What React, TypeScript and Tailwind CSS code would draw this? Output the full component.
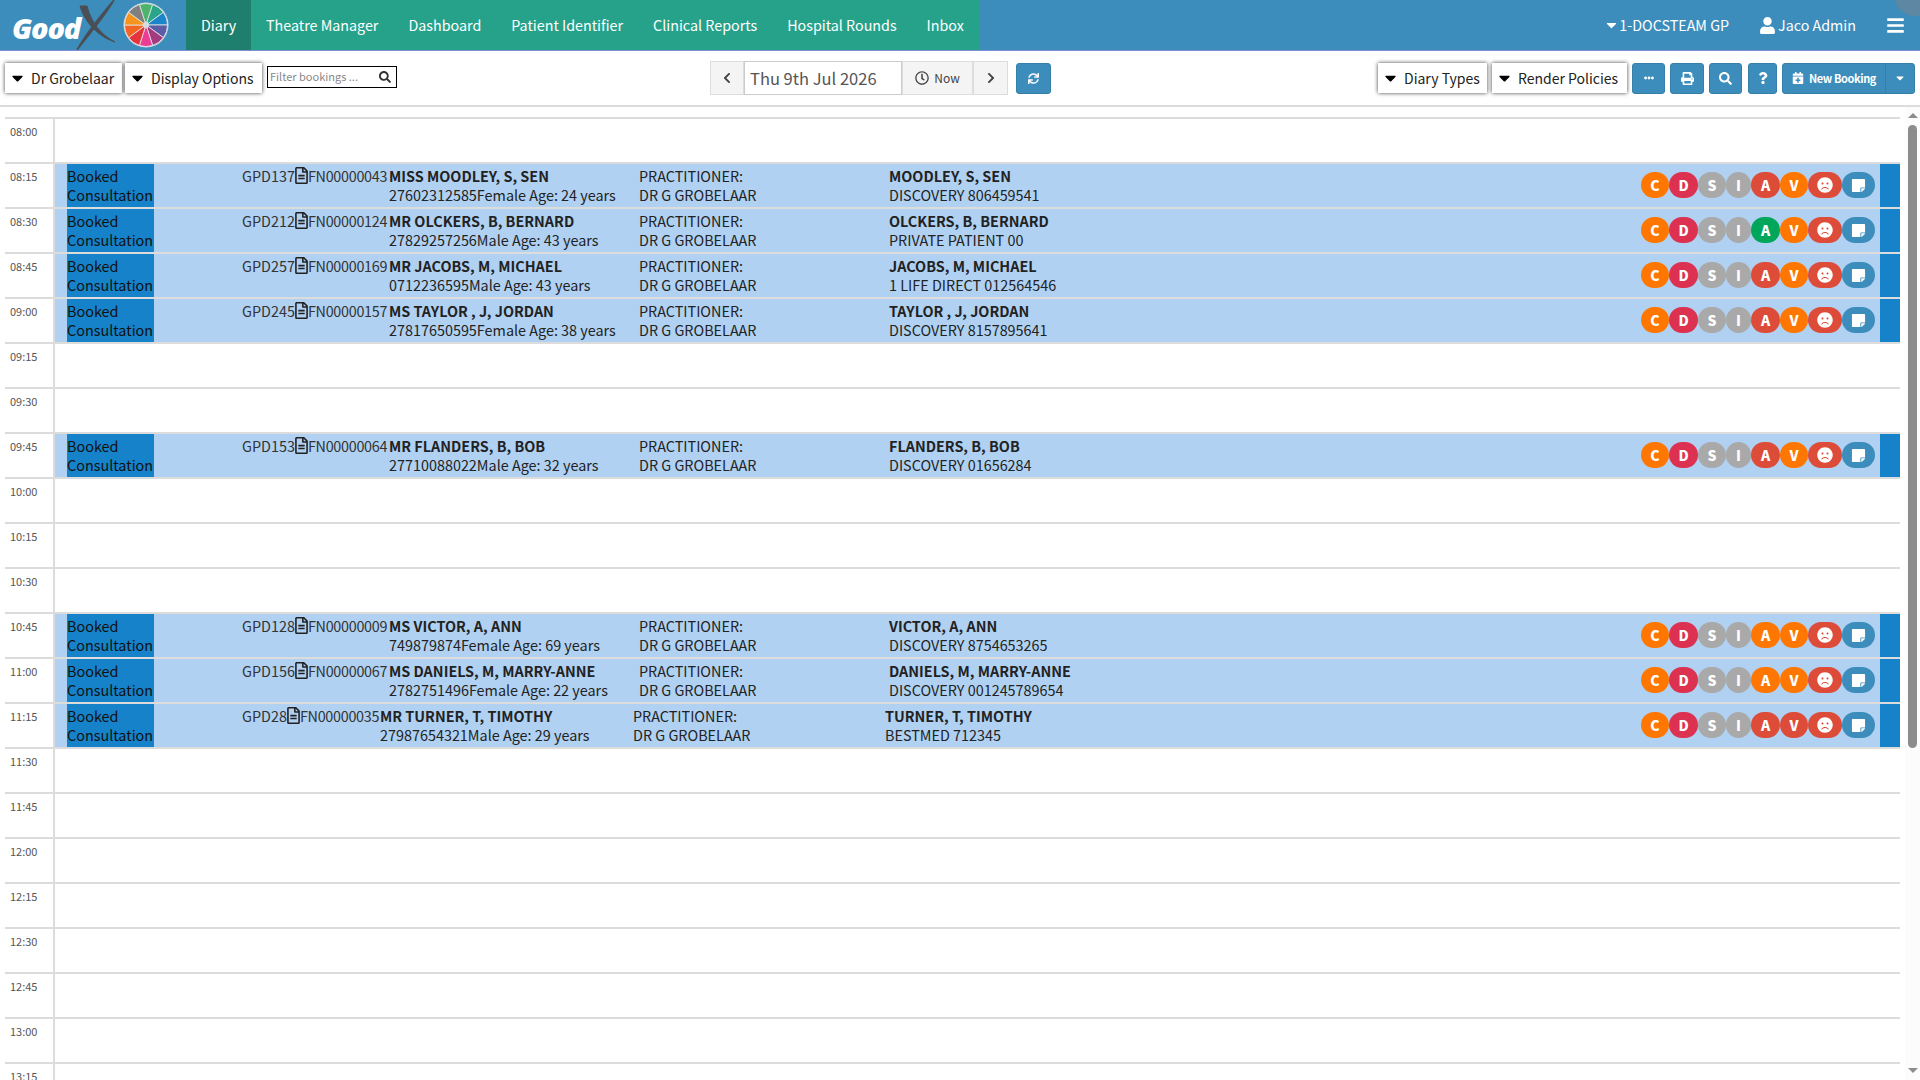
import { FaCalendarPlus, FaCaretDown, FaChevronLeft, FaChevronRight, FaEllipsisH, FaFrown, FaPrint, FaQuestion, FaRegClock, FaRegFileAlt, FaSearch, FaStickyNote, FaSync, FaUser, FaBars } from 'react-icons/fa';

const font = "font-['Noto_Sans_CJK_SC','Liberation_Sans',sans-serif]";

const red = 'bg-[#dd4b39]';
const orange = 'bg-[#ff7701]';
const green = 'bg-[#00a65a]';

type Booking = {
  gpd: string;
  fn: string;
  name: string;
  phone: string;
  info: string;
  patient: string;
  aid: string;
  a: string;
  v: string;
  w1: string;
  w2: string;
  w3: string;
};

const defaults = { w1: 'w-[147px]', w2: 'w-[250px]', w3: 'w-[250px]' };

const bookings: Record<string, Booking> = {
  '08:15': { ...defaults, gpd: 'GPD137', fn: 'FN00000043', name: 'MISS MOODLEY, S, SEN', phone: '27602312585', info: 'Female Age: 24 years', patient: 'MOODLEY, S, SEN', aid: 'DISCOVERY 806459541', a: red, v: orange },
  '08:30': { ...defaults, gpd: 'GPD212', fn: 'FN00000124', name: 'MR OLCKERS, B, BERNARD', phone: '27829257256', info: 'Male Age: 43 years', patient: 'OLCKERS, B, BERNARD', aid: 'PRIVATE PATIENT 00', a: green, v: orange },
  '08:45': { ...defaults, gpd: 'GPD257', fn: 'FN00000169', name: 'MR JACOBS, M, MICHAEL', phone: '0712236595', info: 'Male Age: 43 years', patient: 'JACOBS, M, MICHAEL', aid: '1 LIFE DIRECT 012564546', a: red, v: orange },
  '09:00': { ...defaults, gpd: 'GPD245', fn: 'FN00000157', name: 'MS TAYLOR , J, JORDAN', phone: '27817650595', info: 'Female Age: 38 years', patient: 'TAYLOR , J, JORDAN', aid: 'DISCOVERY 8157895641', a: red, v: orange },
  '09:45': { ...defaults, gpd: 'GPD153', fn: 'FN00000064', name: 'MR FLANDERS, B, BOB', phone: '27710088022', info: 'Male Age: 32 years', patient: 'FLANDERS, B, BOB', aid: 'DISCOVERY 01656284', a: red, v: orange },
  '10:45': { ...defaults, gpd: 'GPD128', fn: 'FN00000009', name: 'MS VICTOR, A, ANN', phone: '749879874', info: 'Female Age: 69 years', patient: 'VICTOR, A, ANN', aid: 'DISCOVERY 8754653265', a: orange, v: orange },
  '11:00': { ...defaults, gpd: 'GPD156', fn: 'FN00000067', name: 'MS DANIELS, M, MARRY-ANNE', phone: '2782751496', info: 'Female Age: 22 years', patient: 'DANIELS, M, MARRY-ANNE', aid: 'DISCOVERY 001245789654', a: orange, v: orange },
  '11:15': { gpd: 'GPD28', fn: 'FN00000035', name: 'MR TURNER, T, TIMOTHY', phone: '27987654321', info: 'Male Age: 29 years', patient: 'TURNER, T, TIMOTHY', aid: 'BESTMED 712345', a: red, v: red, w1: 'w-[138px]', w2: 'w-[253px]', w3: 'w-[252px]' },
};

const times = ['08:00', '08:15', '08:30', '08:45', '09:00', '09:15', '09:30', '09:45', '10:00', '10:15', '10:30', '10:45', '11:00', '11:15', '11:30', '11:45', '12:00', '12:15', '12:30', '12:45', '13:00', '13:15'];

const navItems = ['Theatre Manager', 'Dashboard', 'Patient Identifier', 'Clinical Reports', 'Hospital Rounds', 'Inbox'];

const wheelColors = ['#4cb56b', '#2aa58a', '#1a85c8', '#5b5ea6', '#a33b80', '#e93d96', '#e6343c', '#f26522', '#f7941d', '#808080'];

function Wheel() {
  const point = (deg: number, r: number) => {
    const rad = ((deg - 90) * Math.PI) / 180;
    return `${23 + r * Math.cos(rad)} ${23 + r * Math.sin(rad)}`;
  };
  return (
    <svg width="46" height="46" viewBox="0 0 46 46">
      <circle cx="23" cy="23" r="22.5" fill="#d5dde3" />
      {wheelColors.map((c, i) => {
        const start = -18 + i * 36;
        return <path key={c} d={`M${point(start, 3)} L${point(start, 21.5)} A21.5 21.5 0 0 1 ${point(start + 36, 21.5)} L${point(start + 36, 3)} Z`} fill={c} stroke="#e4e8ea" strokeWidth="0.8" />;
      })}
    </svg>
  );
}

function Logo() {
  return (
    <div className="relative w-[186px] h-full shrink-0">
      <span className="absolute left-[12px] top-[10px] text-[29px] leading-[36px] font-extrabold italic text-white font-['Open_Sans',sans-serif] tracking-[-1.2px]">Good</span>
      <svg className="absolute left-[76px] top-0" width="44" height="50" viewBox="0 0 44 50">
        <path d="M4 6 C8 20 20 36 39 42 C25 35 15 22 11 6 Z" fill="#4a4f55" stroke="#4a4f55" strokeWidth="1" />
        <path d="M38 0 C26 14 12 30 1 50 C13 34 28 18 38 0 Z" fill="#4a4f55" stroke="#4a4f55" strokeWidth="1.5" />
      </svg>
      <div className="absolute left-[123px] top-[2px]">
        <Wheel />
      </div>
    </div>
  );
}

function Dropdown({ label, width }: { label: string; width: string }) {
  return (
    <div className={`${width} h-[30px] bg-white flex items-center pl-[7px] gap-[8px] text-[14px] text-[#222] shadow-[0_0_4px_rgba(0,0,0,0.75)]`}>
      <FaCaretDown className="w-[11px] h-[18px] text-black shrink-0" />
      <span className="whitespace-nowrap">{label}</span>
    </div>
  );
}

function Square({ width, children }: { width: string; children: React.ReactNode }) {
  return <div className={`${width} h-[31px] bg-[#3c8dbc] border border-[#367fa9] rounded-[3px] flex items-center justify-center text-white text-[13px]`}>{children}</div>;
}

function Toolbar() {
  return (
    <div className="h-[54px] flex items-center pl-[5px] pr-[5px]">
      <div className="flex items-center gap-[3px]">
        <Dropdown label="Dr Grobelaar" width="w-[117px]" />
        <Dropdown label="Display Options" width="w-[137px]" />
      </div>
      <div className="ml-[5px] w-[130px] h-[22px] border border-black flex items-center justify-between pl-[2px] pr-[5px] -mt-[3px]">
        <span className="text-[11px] text-[#888]">Filter bookings ...</span>
        <FaSearch className="text-[12px] text-[#333]" />
      </div>
      <div className="ml-[313px] flex items-stretch h-[34px] text-[#444]">
        <div className="w-[34px] bg-[#f4f4f4] border border-[#ddd] flex items-center justify-center"><FaChevronLeft className="text-[12px]" /></div>
        <div className="w-[158px] bg-white border border-[#ccc] flex items-center pl-[5px] text-[16.5px] text-[#555]">Thu 9th Jul 2026</div>
        <div className="w-[71px] bg-[#f4f4f4] border border-[#ddd] flex items-center justify-center gap-[5px] text-[12px]"><FaRegClock className="text-[14px]" />Now</div>
        <div className="w-[35px] bg-[#f4f4f4] border border-[#ddd] flex items-center justify-center"><FaChevronRight className="text-[12px]" /></div>
      </div>
      <div className="ml-[8px]"><Square width="w-[35px]"><FaSync className="text-[11px]" /></Square></div>
      <div className="ml-auto flex items-center">
        <Dropdown label="Diary Types" width="w-[109px]" />
        <div className="ml-[5px]"><Dropdown label="Render Policies" width="w-[135px]" /></div>
        <div className="ml-[5px]"><Square width="w-[33px]"><FaEllipsisH className="text-[10px]" /></Square></div>
        <div className="ml-[5px]"><Square width="w-[34px]"><FaPrint /></Square></div>
        <div className="ml-[5px]"><Square width="w-[33px]"><FaSearch /></Square></div>
        <div className="ml-[6px]"><Square width="w-[29px]"><FaQuestion className="text-[12px]" /></Square></div>
        <div className="ml-[5px] w-[133px] h-[31px] bg-[#3c8dbc] border border-[#367fa9] rounded-[3px] flex text-white">
          <div className="w-[103px] flex items-center justify-center gap-[5px] border-r border-[#367fa9] text-[11px] font-semibold tracking-[-0.4px]"><FaCalendarPlus className="text-[12px]" />New Booking</div>
          <div className="flex-1 flex items-center justify-center"><FaCaretDown className="text-[12px]" /></div>
        </div>
      </div>
    </div>
  );
}

function Pill({ bg, width, children }: { bg: string; width: string; children: React.ReactNode }) {
  return <div className={`${bg} ${width} h-[26px] rounded-full flex items-center justify-center text-white text-[14px] font-black`}>{children}</div>;
}

function BookingRow({ b }: { b: Booking }) {
  return (
    <div className="flex-1 h-full bg-[#b0d1f2] flex text-[14.4px] leading-[19px] text-[#222]">
      <div className="ml-[12px] w-[87px] bg-[#1582c9] pt-[2px] text-[#111] shrink-0 overflow-hidden whitespace-nowrap">Booked<br />Consultation</div>
      <div className="ml-[88px] pt-[2px] flex whitespace-nowrap">
        <div className={`${b.w1} flex items-start text-[#333]`}>
          {b.gpd}
          <FaRegFileAlt className="w-[13px] h-[17px] mt-[1px] text-[#222] shrink-0" />
          <span className="tracking-[-0.3px]">{b.fn}</span>
        </div>
        <div className={b.w2}>
          <div className="font-bold">{b.name}</div>
          <div>{b.phone}{b.info}</div>
        </div>
        <div className={b.w3}>
          <div>PRACTITIONER:</div>
          <div>DR G GROBELAAR</div>
        </div>
        <div>
          <div className="font-bold">{b.patient}</div>
          <div>{b.aid}</div>
        </div>
      </div>
      <div className="ml-auto flex items-center pr-[5px] pb-[1px]">
        <Pill bg={orange} width="w-[28px]">C</Pill>
        <Pill bg="bg-[#dc3151]" width="w-[29px]">D</Pill>
        <Pill bg="bg-[#a9a9a9]" width="w-[28px]">S</Pill>
        <Pill bg="bg-[#a9a9a9]" width="w-[25px]">I</Pill>
        <Pill bg={b.a} width="w-[29px]">A</Pill>
        <Pill bg={b.v} width="w-[28px]">V</Pill>
        <Pill bg={red} width="w-[34px]"><FaFrown className="text-[16px]" /></Pill>
        <Pill bg="bg-[#3c8dbc]" width="w-[33px]"><FaStickyNote className="text-[15px]" /></Pill>
      </div>
      <div className="w-[20px] bg-[#1582c9] shrink-0" />
    </div>
  );
}

export default function App() {
  return (
    <div className={`w-[1920px] h-[1080px] overflow-hidden bg-white relative flex flex-col ${font}`}>
      {/* Top nav */}
      <div className="h-[51px] shrink-0 bg-[#3c8dbc] border-b border-[#7f8fcf] flex text-white text-[14.3px] relative overflow-hidden">
        <Logo />
        <div className="flex bg-[#26a28b]">
          <div className="w-[65px] bg-[#1f7f6f] flex items-center justify-center">Diary</div>
          {navItems.map(n => <div key={n} className="px-[15px] flex items-center">{n}</div>)}
        </div>
        <div className="ml-auto flex items-center pr-[15px]">
          <FaCaretDown className="w-[11px] h-[16px] mr-[2px]" />
          <span>1-DOCSTEAM GP</span>
          <FaUser className="ml-[30px] text-[17px]" />
          <span className="ml-[2px]">Jaco Admin</span>
          <FaBars className="ml-[30px] text-[19px]" />
        </div>
        <div className="absolute -right-[16px] -top-[26px] w-[42px] h-[42px] rounded-full bg-[#5d87a3]" />
      </div>

      <Toolbar />
      <div className="h-[2px] bg-[#dcdcdc] shrink-0" />

      {/* Diary grid */}
      <div className="flex flex-1 min-h-0 mt-[10px]">
        <div className="w-[1895px] ml-[5px] shrink-0">
          {times.map(t => (
            <div key={t} className="h-[45px] border-t-2 border-[#dcdcdc] flex">
              <div className="w-[50px] shrink-0 border-r-2 border-[#dcdcdc] text-[11px] leading-[16px] text-[#555] pl-[5px] pt-[4px]">{t}</div>
              {bookings[t] && <BookingRow b={bookings[t]} />}
            </div>
          ))}
        </div>
        <div className="ml-auto w-[15px] -mt-[10px] bg-[#fcfcfc] flex flex-col items-center relative">
          <div className="mt-[6px] w-0 h-0 border-x-[5px] border-x-transparent border-b-[5px] border-b-[#8c8c8c]" />
          <div className="mt-[7px] w-[9px] h-[623px] rounded-full bg-[#8c8c8c]" />
          <div className="absolute bottom-[7px] w-0 h-0 border-x-[5px] border-x-transparent border-t-[5px] border-t-[#8c8c8c]" />
        </div>
      </div>
    </div>
  );
}
